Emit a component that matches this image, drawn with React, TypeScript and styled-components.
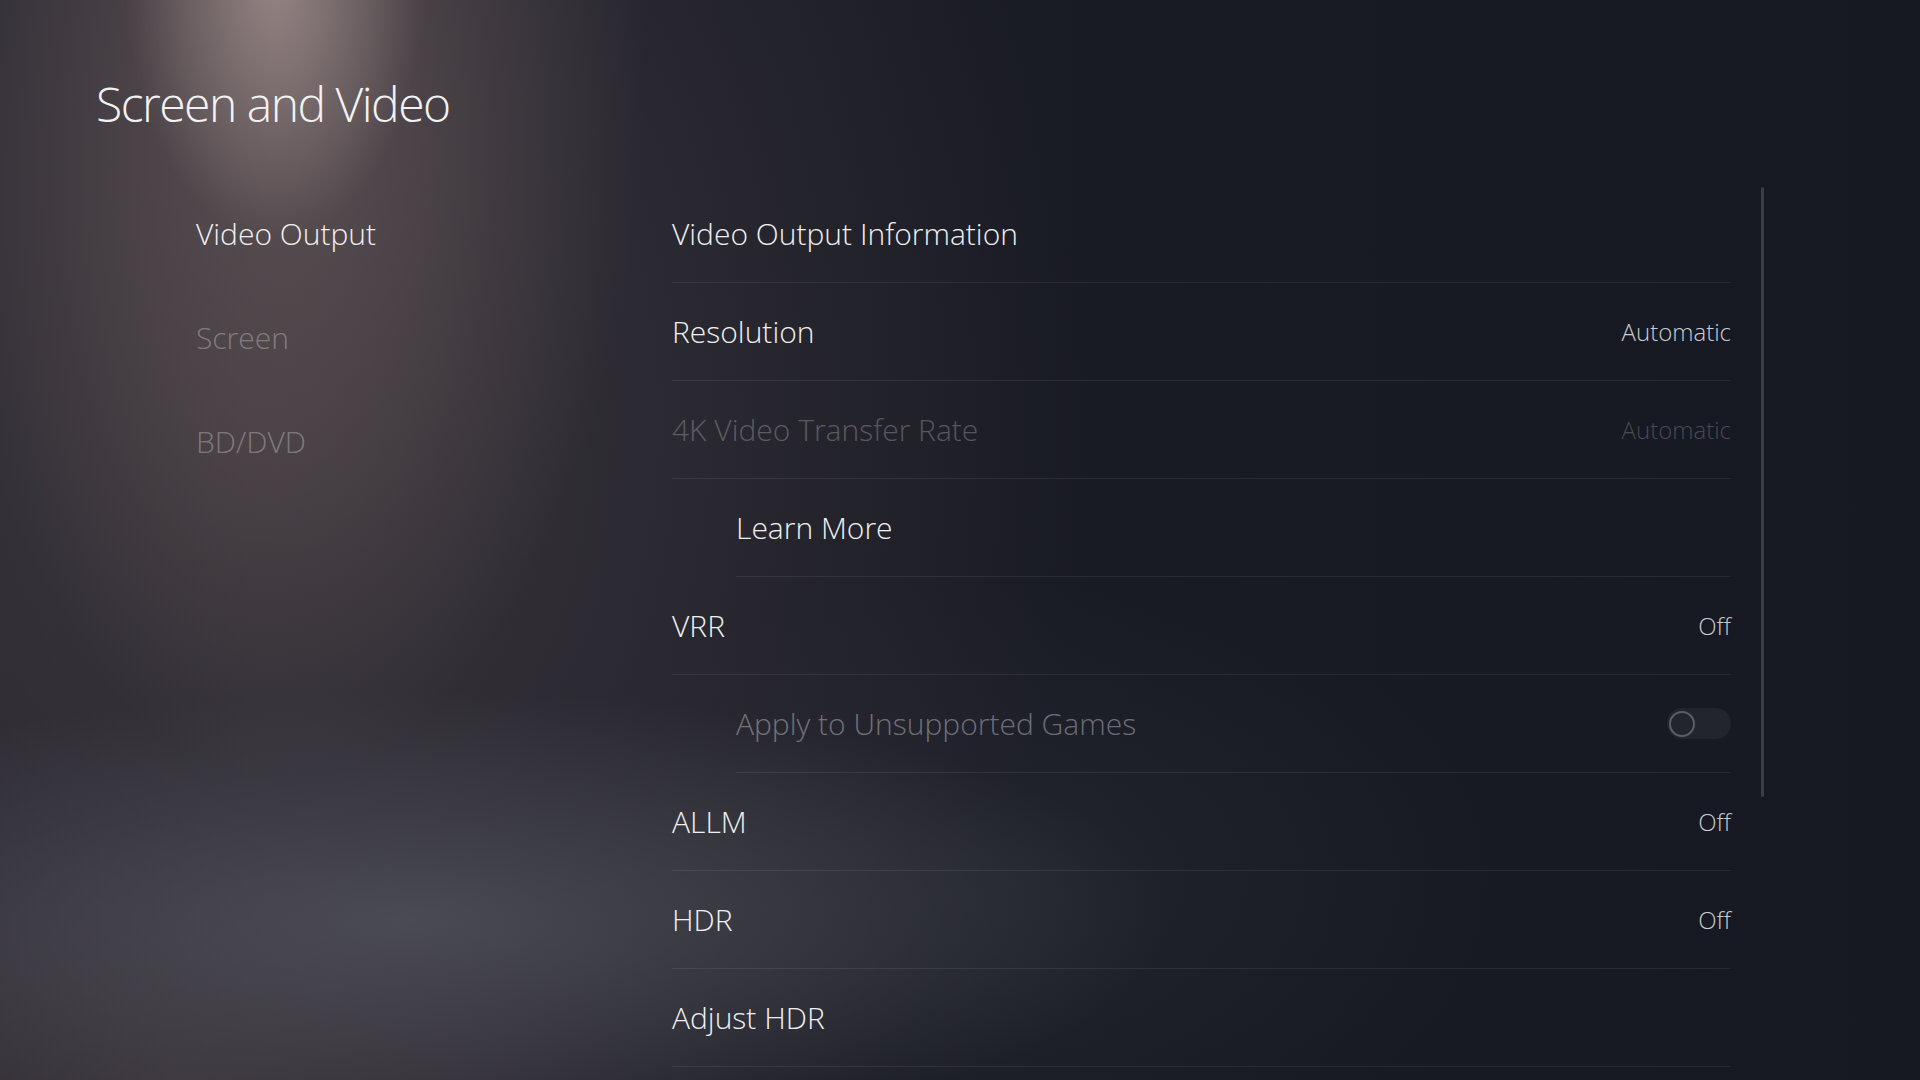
import styled, { createGlobalStyle } from 'styled-components'

type Setting = {
	label: string
	value?: string
	toggle?: boolean
	indent?: boolean
	tone?: 'normal' | 'disabled' | 'muted'
}

const settings: Setting[] = [
	{label: 'Video Output Information'},
	{label: 'Resolution', value: 'Automatic'},
	{label: '4K Video Transfer Rate', value: 'Automatic', tone: 'disabled'},
	{label: 'Learn More', indent: true},
	{label: 'VRR', value: 'Off'},
	{label: 'Apply to Unsupported Games', toggle: true, indent: true, tone: 'muted'},
	{label: 'ALLM', value: 'Off'},
	{label: 'HDR', value: 'Off'},
	{label: 'Adjust HDR'},
]

const menu = ['Video Output', 'Screen', 'BD/DVD']

export default function App () {
	return <>
		<GlobalStyle />
		<Page>
			<Title>Screen and Video</Title>
			<Content>
				<Sidebar>
					{menu.map((item, i) =>
						<MenuItem key={item} $active={i === 0}>{item}</MenuItem>
					)}
				</Sidebar>
				<List>
					{settings.map(s =>
						<Row key={s.label} $indent={!!s.indent}>
							<Label $tone={s.tone || 'normal'}>{s.label}</Label>
							{s.value && <Value $disabled={s.tone === 'disabled'}>{s.value}</Value>}
							{s.toggle && <Toggle><Knob /></Toggle>}
						</Row>
					)}
				</List>
				<ScrollBar />
			</Content>
		</Page>
	</>
}

const GlobalStyle = createGlobalStyle`
	html, body {
		margin: 0;
		padding: 0;
		background: #181a24;
	}
	body {
		font-family: "Open Sans", "Noto Sans", sans-serif;
		-webkit-font-smoothing: antialiased;
	}
`

const Page = styled.div`
	width: 1920px;
	height: 1080px;
	overflow: hidden;
	display: flex;
	flex-direction: column;
	background:
		radial-gradient(ellipse 150px 260px at 275px -20px, rgba(175, 155, 152, 0.7), rgba(175, 155, 152, 0) 100%),
		radial-gradient(ellipse 360px 720px at 285px 60px, rgba(125, 108, 108, 0.55), rgba(125, 108, 108, 0) 100%),
		radial-gradient(ellipse 760px 230px at 410px 920px, rgba(92, 94, 103, 0.6), rgba(92, 94, 103, 0) 100%),
		radial-gradient(ellipse 560px 260px at 180px 1080px, rgba(70, 60, 66, 0.6), rgba(70, 60, 66, 0) 100%),
		radial-gradient(ellipse 820px 1000px at 260px 420px, rgba(72, 64, 68, 0.65), rgba(72, 64, 68, 0) 100%),
		radial-gradient(ellipse 500px 300px at 1000px 880px, rgba(50, 52, 62, 0.35), rgba(50, 52, 62, 0) 100%),
		linear-gradient(90deg, #23232d 0%, #1d1e28 35%, #181a24 60%, #161822 100%);
`

const Title = styled.h1`
	margin: 80px 0 0 96px;
	font-size: 48px;
	line-height: 48px;
	font-weight: 300;
	letter-spacing: -1.5px;
	color: #f2f2f2;
`

const Content = styled.div`
	display: flex;
	margin-top: 57px;
	padding-left: 196px;
`

const Sidebar = styled.div`
	width: 476px;
	display: flex;
	flex-direction: column;
	gap: 8px;
`

const MenuItem = styled.div<{$active: boolean}>`
	height: 96px;
	display: flex;
	align-items: center;
	font-size: 30px;
	font-weight: 300;
	color: ${props => props.$active ? '#f0f0f0' : 'rgba(255, 255, 255, 0.3)'};
`

const List = styled.div`
	width: 1059px;
	display: flex;
	flex-direction: column;
`

const Row = styled.div<{$indent: boolean}>`
	height: 97px;
	margin-left: ${props => props.$indent ? '64px' : '0'};
	display: flex;
	align-items: center;
	justify-content: space-between;
	border-bottom: 1px solid rgba(255, 255, 255, 0.075);
`

const Label = styled.div<{$tone: string}>`
	font-size: 30px;
	font-weight: 300;
	color: ${props => props.$tone === 'disabled' ? 'rgba(255, 255, 255, 0.25)'
		: props.$tone === 'muted' ? 'rgba(255, 255, 255, 0.36)' : '#f0f0f0'};
`

const Value = styled.div<{$disabled: boolean}>`
	font-size: 24px;
	font-weight: 300;
	color: ${props => props.$disabled ? 'rgba(255, 255, 255, 0.22)' : '#cbcbd0'};
`

const Toggle = styled.div`
	width: 64px;
	height: 31px;
	box-sizing: border-box;
	padding: 0 2px;
	border-radius: 16px;
	background: #22242e;
	display: flex;
	align-items: center;
`

const Knob = styled.div`
	width: 26px;
	height: 26px;
	box-sizing: border-box;
	border-radius: 50%;
	border: 2px solid #5c5e67;
`

const ScrollBar = styled.div`
	width: 3px;
	height: 610px;
	margin: 2px 0 0 30px;
	border-radius: 2px;
	background: #3a3c47;
`
